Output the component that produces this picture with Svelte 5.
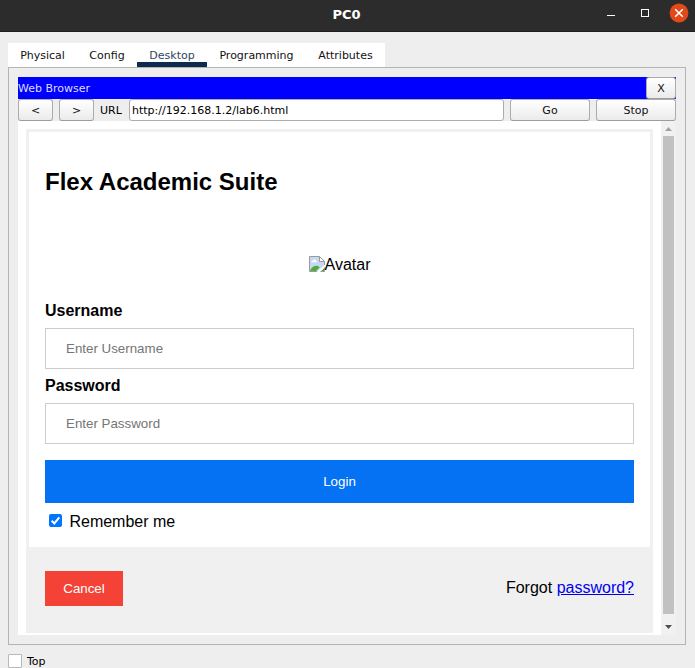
<script>
  const tabs = [
    { name: 'Physical', width: 69 },
    { name: 'Config', width: 60 },
    { name: 'Desktop', width: 70 },
    { name: 'Programming', width: 99 },
    { name: 'Attributes', width: 79 }
  ];
  let active = $state('Desktop');
  let url = $state('http://192.168.1.2/lab6.html');
  let remember = $state(true);
</script>

<div class="window">
  <header class="titlebar">
    <span class="title">PC0</span>
    <div class="controls">
      <svg width="84" height="20" viewBox="0 0 84 20">
        <path d="M2 12.5h8" stroke="#fff" fill="none" />
        <rect x="36.5" y="6.5" width="7" height="7" stroke="#fff" fill="none" />
        <circle cx="74" cy="10" r="9.4" fill="#e2491a" />
        <path d="M70.2 6.2l7.6 7.6M77.8 6.2l-7.6 7.6" stroke="#fff" stroke-width="1.5" fill="none" />
      </svg>
    </div>
  </header>

  <nav class="tabs">
    {#each tabs as tab}
      <button class="tab" class:active={active === tab.name} style="width: {tab.width}px" onclick={() => (active = tab.name)}>{tab.name}</button>
    {/each}
  </nav>

  <main class="panel">
    <div class="apptitle">
      <span>Web Browser</span>
      <button class="push close">X</button>
    </div>
    <div class="toolbar">
      <button class="push arrow">&lt;</button>
      <button class="push arrow">&gt;</button>
      <span class="urllabel">URL</span>
      <input class="url" bind:value={url} />
      <button class="push wide">Go</button>
      <button class="push wide">Stop</button>
    </div>

    <div class="view">
      <div class="page">
        <div class="form">
          <div class="container">
            <h2>Flex Academic Suite</h2>
            <div class="avatar">
              <svg width="16" height="16" viewBox="0 0 16 16">
                <path d="M.5.5h10l5 5v10H.5z" fill="#c5d8f6" />
                <path d="M2.5 6.2c0-1.5 1.2-1.6 1.6-1.4.5-1.7 2.6-1.5 2.8 0 1.2-.1 1.5 1.4.7 1.4z" fill="#fff" />
                <path d="M1 15c1-3.5 4-5.2 6.5-5.2 1.3 0 2.4.6 3.2 1.7L7 15z" fill="#53a93b" />
                <path d="M12 15l3-3v3z" fill="#53a93b" />
                <path d="M16 8.6v2.4L11 16H7.8z" fill="#fff" />
                <path d="M8 15.5H.5V.5h10l5 5v3.5" fill="none" stroke="#9a9a9a" />
                <path d="M10.5.5v5h5z" fill="#fff" stroke="#9a9a9a" />
                <path d="M11.5 15.5h4v-4" fill="none" stroke="#9a9a9a" />
              </svg><span>Avatar</span>
            </div>
            <label class="field" for="user">Username</label>
            <input id="user" class="text" type="text" placeholder="Enter Username" />
            <label class="field second" for="pass">Password</label>
            <input id="pass" class="text" type="password" placeholder="Enter Password" />
            <button class="login">Login</button>
            <label class="remember">
              <input type="checkbox" bind:checked={remember} />
              <span class="check" class:on={remember}>
                <svg width="13" height="13" viewBox="0 0 13 13"><path d="M2.7 6.8l2.6 2.6 5-6" fill="none" stroke="#fff" stroke-width="2" /></svg>
              </span>
              <span>Remember me</span>
            </label>
          </div>
          <div class="footer">
            <button class="cancel">Cancel</button>
            <span class="forgot">Forgot <a href="#password">password?</a></span>
          </div>
        </div>
      </div>
      <div class="scrollbar">
        <svg width="15" height="15" viewBox="0 0 15 15"><path d="M4 10l3.5-4L11 10z" fill="#a3a3a3" /></svg>
        <div class="thumb"></div>
        <svg width="15" height="21" viewBox="0 0 15 21"><path d="M4 11l3.5 4 3.5-4z" fill="#505050" /></svg>
      </div>
    </div>
  </main>

  <label class="top">
    <input type="checkbox" />
    <span class="box"></span>
    <span>Top</span>
  </label>
</div>

<style>
  :global(body) { margin: 0; overflow: hidden; }
  .window { width: 695px; height: 668px; overflow: hidden; background: #eee; color: #000; font: 11px "DejaVu Sans", sans-serif; display: flex; flex-direction: column; }
  .window * { box-sizing: border-box; }
  button, input { font: inherit; margin: 0; padding: 0; }
  svg { display: block; flex: none; }
  .titlebar { flex: none; height: 32px; background: #2c2c2c; border-bottom: 1px solid #1f1f1f; display: grid; grid-template-columns: 1fr auto 1fr; padding: 3px 2px 0 0; color: #fff; }
  .title { grid-column: 2; font-size: 13px; font-weight: bold; line-height: 23px; }
  .controls { display: flex; justify-content: flex-end; padding-right: 4px; }
  .tabs { display: flex; flex: none; width: 377px; height: 24px; margin: 11px 0 0 8px; background: #fff; }
  .tab { border: 0; background: none; color: #111; text-align: center; height: 24px; line-height: 25px; border-bottom: 0 solid #0d2a4f; white-space: nowrap; }
  .tab.active { color: #2c4565; border-bottom-width: 5px; }
  .panel { flex: none; width: 678px; height: 578px; margin-left: 8px; border: 1px solid #b4b4b4; padding: 9px; }
  .apptitle { height: 22px; background: #00f; color: #dedeff; display: flex; justify-content: space-between; line-height: 23px; }
  .push { border: 1px solid #acacac; border-bottom-color: #9d9d9d; border-radius: 3px; background: linear-gradient(#fff, #ebebeb); color: #111; height: 22px; padding-top: 1px; line-height: 19px; flex: none; }
  .close { width: 30px; }
  .toolbar { height: 22px; display: flex; gap: 6px; }
  .arrow { width: 35px; }
  .urllabel { width: 23px; line-height: 23px; }
  .url { width: 375px; height: 22px; border: 1px solid #acacac; border-radius: 3px; padding: 0 2px; background: #fff; color: #000; }
  .wide { width: 80px; }
  .view { display: flex; height: 514px; }
  .page { width: 643px; padding: 8px 8px 0; background: #fff; font: 16px/18px "Liberation Sans", Arial, sans-serif; }
  .form { height: 504px; border: 3px solid #f0f0f0; border-bottom: 0; background: #f0f0f0; }
  .container { height: 415px; background: #fff; padding: 36px 16px 0; display: flex; flex-direction: column; }
  h2 { margin: 0; font-size: 24px; line-height: 28px; }
  .avatar { display: flex; justify-content: center; margin-top: 60px; height: 18px; }
  .field { font-weight: bold; margin-top: 28px; }
  .field.second { margin-top: 8px; }
  .text { width: 100%; height: 41px; margin-top: 8px; padding: 0 20px; border: 1px solid #ccc; font-size: 13.333px; background: #fff; border-radius: 0; }
  .text::placeholder { color: #757575; }
  .login { width: 100%; height: 43px; margin-top: 16px; border: 0; background: #0472f3; color: #fff; font-size: 13.333px; }
  .remember { display: flex; padding-left: 4px; margin-top: 10px; }
  .remember input, .top input { appearance: none; width: 0; height: 0; }
  .check { width: 13px; height: 13px; margin: 1px 7.45px 0 0; border-radius: 2px; box-shadow: inset 0 0 0 1px #767676; }
  .check.on { background: #0075ff; box-shadow: none; }
  .footer { display: flex; justify-content: space-between; align-items: flex-start; padding: 24px 16px 0; }
  .cancel { width: 78px; height: 35px; border: 0; background: #f44336; color: #fff; font-size: 13.333px; }
  .forgot { padding-top: 8px; }
  a { color: #0000ee; }
  .scrollbar { width: 15px; background: #f1f1f1; display: flex; flex-direction: column; }
  .thumb { width: 11px; height: 478px; margin: 0 2px; background: #c1c1c1; }
  .top { display: flex; margin: 9px 0 0 8px; line-height: 15px; }
  .box { width: 14px; height: 14px; margin-right: 5px; border: 1px solid #b8b8b8; background: #fff; border-radius: 1px; }
</style>
